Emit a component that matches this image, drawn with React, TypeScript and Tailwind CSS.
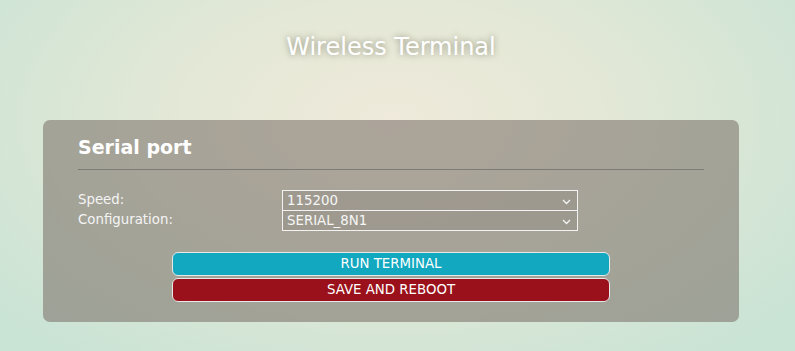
import React from "react";

function Chevron() {
  return (
    <svg width="9" height="6" viewBox="0 0 9 6" className="absolute right-[6px] top-[8px]">
      <path d="M1 1 L4.5 4.5 L8 1" fill="none" stroke="#f4f4f4" strokeWidth="1.3" />
    </svg>
  );
}

function Select({ value }: { value: string }) {
  return (
    <div className="relative h-[21px] w-[296px] border border-[#f2f2f2] bg-black/[0.06] pl-[4px] text-[13.33px] leading-[19px] text-[#f6f6f6]">
      {value}
      <Chevron />
    </div>
  );
}

export default function App() {
  return (
    <div
      className="h-[351px] w-[795px] overflow-hidden"
      style={{
        fontFamily: '"DejaVu Sans", sans-serif',
        background:
          "radial-gradient(ellipse 520px 300px at 390px 120px, #efeadb 0%, #e4e8d6 40%, #c9e3d5 100%)",
      }}
    >
      <div className="pr-[13px] pt-[31px] text-center text-[24px] leading-[32px] text-white [text-shadow:0_0_6px_rgba(80,80,60,0.6)]">
        Wireless Terminal
      </div>
      <div className="ml-[43px] mt-[57px] w-[696px] rounded-[7px] bg-[rgba(124,114,106,0.58)] px-[35px] pb-[20px] pt-[15px]">
        <div className="text-[19px] font-bold leading-[25px] text-white">Serial port</div>
        <div className="mt-[9px] h-px bg-[#7d7b75]" />
        <div className="mt-[20px] grid grid-cols-[204px_296px] text-[13.33px] text-[#f4f4f4]">
          <div className="leading-[19px]">Speed:</div>
          <Select value="115200" />
          <div className="leading-[17px]">Configuration:</div>
          <div className="-mt-px">
            <Select value="SERIAL_8N1" />
          </div>
        </div>
        <div className="mx-auto mt-[21px] flex w-[438px] flex-col gap-[2px]">
          <button className="h-[24px] rounded-[6px] border border-[#e8e8e8] bg-[#12a8c0] text-[13.33px] leading-[22px] text-white">
            RUN TERMINAL
          </button>
          <button className="h-[24px] rounded-[6px] border border-[#e8e8e8] bg-[#9a111b] text-[13.33px] leading-[22px] text-white">
            SAVE AND REBOOT
          </button>
        </div>
      </div>
    </div>
  );
}
